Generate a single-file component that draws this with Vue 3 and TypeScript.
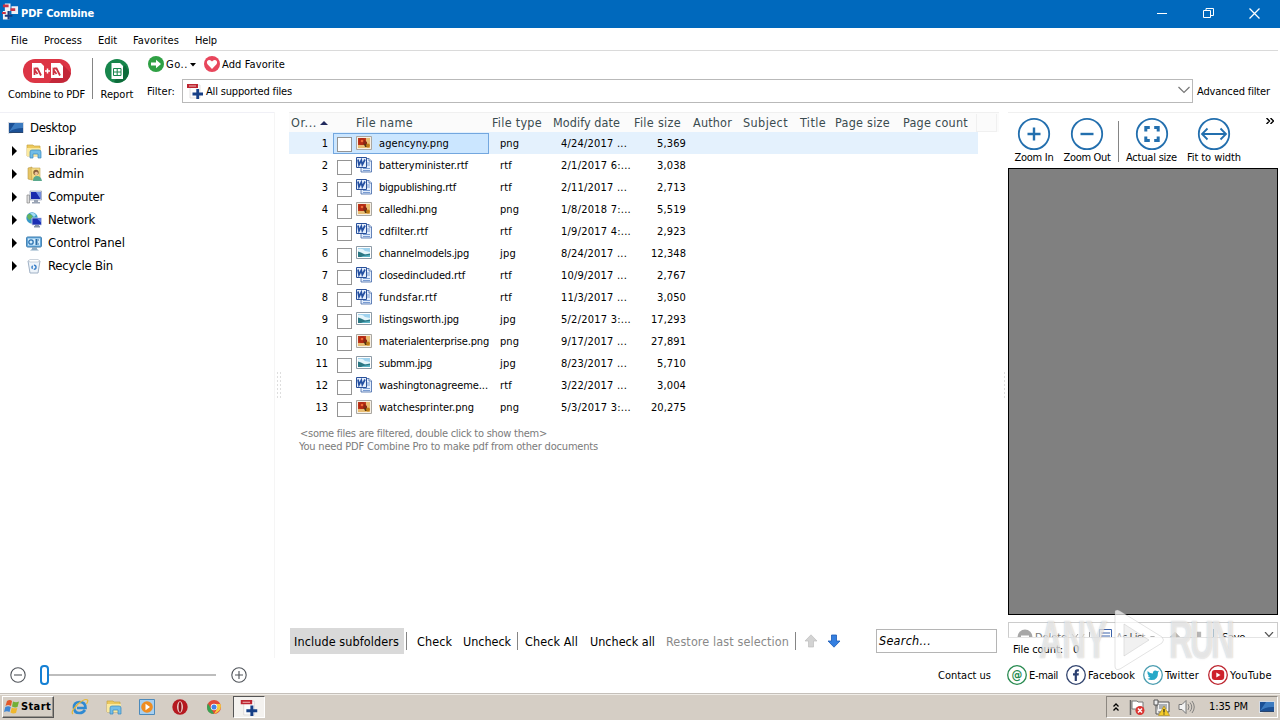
<script setup lang="ts">
import type { Directive } from 'vue'

// Spreads a single-line label over a given width in pixels.
const vFit: Directive<HTMLElement, number> = {
  mounted(el, { value }) {
    el.style.letterSpacing = '0'
    const range = document.createRange()
    range.selectNodeContents(el)
    const natural = range.getBoundingClientRect().width
    const count = (el.textContent ?? '').trim().length
    el.style.letterSpacing = `${(value - natural) / count}px`
    el.style.width = `${value}px`
  },
}

const menu: [string, number][] = [['File', 17], ['Process', 38], ['Edit', 19], ['Favorites', 46], ['Help', 22]]

const tree = [
  { icon: 'libraries', label: 'Libraries', w: 50 },
  { icon: 'user', label: 'admin', w: 36 },
  { icon: 'computer', label: 'Computer', w: 56 },
  { icon: 'network', label: 'Network', w: 47 },
  { icon: 'control', label: 'Control Panel', w: 77 },
  { icon: 'recycle', label: 'Recycle Bin', w: 65 },
]

const columns = [
  { label: 'Or...', w: 26, col: 65 },
  { label: 'File name', w: 57, col: 136 },
  { label: 'File type', w: 50, col: 61 },
  { label: 'Modify date', w: 67, col: 81 },
  { label: 'File size', w: 47, col: 59 },
  { label: 'Author', w: 39, col: 50 },
  { label: 'Subject', w: 45, col: 57 },
  { label: 'Title', w: 26, col: 35 },
  { label: 'Page size', w: 55, col: 68 },
  { label: 'Page count', w: 65, col: 73 },
]

const typeWidth: Record<string, number> = { png: 19, rtf: 12, jpg: 16 }

const files = [
  { name: 'agencyny.png', w: 70, type: 'png', date: '4/24/2017 ...', dw: 66, size: '5,369' },
  { name: 'batteryminister.rtf', w: 89, type: 'rtf', date: '2/1/2017 6:...', dw: 70, size: '3,038' },
  { name: 'bigpublishing.rtf', w: 77, type: 'rtf', date: '2/11/2017 ...', dw: 66, size: '2,713' },
  { name: 'calledhi.png', w: 58, type: 'png', date: '1/8/2018 7:...', dw: 70, size: '5,519' },
  { name: 'cdfilter.rtf', w: 49, type: 'rtf', date: '1/9/2017 4:...', dw: 70, size: '2,923' },
  { name: 'channelmodels.jpg', w: 90, type: 'jpg', date: '8/24/2017 ...', dw: 66, size: '12,348' },
  { name: 'closedincluded.rtf', w: 86, type: 'rtf', date: '10/9/2017 ...', dw: 66, size: '2,767' },
  { name: 'fundsfar.rtf', w: 58, type: 'rtf', date: '11/3/2017 ...', dw: 66, size: '3,050' },
  { name: 'listingsworth.jpg', w: 80, type: 'jpg', date: '5/2/2017 3:...', dw: 70, size: '17,293' },
  { name: 'materialenterprise.png', w: 110, type: 'png', date: '9/17/2017 ...', dw: 66, size: '27,891' },
  { name: 'submm.jpg', w: 53, type: 'jpg', date: '8/23/2017 ...', dw: 66, size: '5,710' },
  { name: 'washingtonagreeme...', w: 109, type: 'rtf', date: '3/22/2017 ...', dw: 66, size: '3,004' },
  { name: 'watchesprinter.png', w: 95, type: 'png', date: '5/3/2017 3:...', dw: 70, size: '20,275' },
]
</script>

<template>
  <div class="screen">
    <svg class="defs" width="0" height="0">
      <defs>
        <symbol id="pdfplus" viewBox="0 0 16 16">
          <path d="M3 2h10v13H3z" fill="#fbfbfb" stroke="#d2cdcd" stroke-width=".6" />
          <path d="M0 1h11v4H0z" fill="#bd2430" />
          <path d="M2 3h7" stroke="#f0b7b7" />
          <path d="M10.700 6v10M5.500 11h10.500" stroke="#163f86" stroke-width="2.800" />
        </symbol>
        <symbol id="monitor" viewBox="0 0 16 16">
          <path d="M0 2h16v11H0z" fill="#d5dae2" />
          <path d="M1 3h14v9H1z" fill="#1b5095" />
          <path d="M1 12L7 3h8v5C9 8 5 9 1 12z" fill="#3c7bc0" />
          <path d="M0 12l5 2H0z" fill="#dfe7ef" />
          <path d="M1 12h14v1H1z" fill="#28456e" />
        </symbol>
        <symbol id="libraries" viewBox="0 0 16 16">
          <path d="M1 2h6l1 1h6v10H1z" fill="#edc95c" stroke="#c5a443" stroke-width=".7" />
          <path d="M1 5h14l-1 8H1z" fill="#fbe99d" />
          <path d="M4 15V9q0-2 2-2h7q2 0 2 2v6h-3v-4H7v4z" fill="#73bde7" stroke="#3787bd" stroke-width=".7" />
        </symbol>
        <symbol id="user" viewBox="0 0 16 16">
          <path d="M2 2l4-1v13l-4-1z" fill="#e7c565" stroke="#b99a48" stroke-width=".6" />
          <path d="M5 2h9v12H6z" fill="#f5dc85" stroke="#c5a651" stroke-width=".6" />
          <circle cx="10" cy="6.500" r="2.700" fill="#8a603b" />
          <circle cx="10.300" cy="7.500" r="1.700" fill="#ecc19b" />
          <path d="M7 15q0-5 4-5t5 5z" fill="#59a98e" />
        </symbol>
        <symbol id="computer" viewBox="0 0 16 16">
          <path d="M1 6h2.500v8H1z" fill="#dedede" stroke="#888" stroke-width=".7" />
          <path d="M4 2h11.500v9H4z" fill="#dbe1ef" stroke="#828da9" stroke-width=".6" />
          <path d="M5 3h9.500v7H5z" fill="#1829ad" />
          <path d="M10 3h4.500v7z" fill="#6f91e6" />
          <path d="M8 11h4v2h2v1.500H6V13h2z" fill="#9aa4b5" />
        </symbol>
        <symbol id="network" viewBox="0 0 16 16">
          <circle cx="6" cy="6" r="5.700" fill="#3798c8" />
          <path d="M2 2q3 0 5 2l-2 3-2 1-2-3zM7 7l3 1-2 3z" fill="#66b45d" />
          <path d="M4 1q4-1 6 2L8 5z" fill="#a4dcf3" />
          <path d="M6 6h9.500v7H6z" fill="#1b2fb4" stroke="#c9d2e4" stroke-width=".8" />
          <path d="M11 6.500h4v4z" fill="#607ee5" />
          <path d="M9 13h4v1h1v1.500H8V14h1z" fill="#8390a6" />
        </symbol>
        <symbol id="control" viewBox="0 0 16 16">
          <rect x=".6" y="2" width="14.800" height="10" rx="1" fill="#69ade0" stroke="#3d7cae" />
          <path d="M2 3.500h12v7H2z" fill="#d5edfc" />
          <circle cx="5" cy="7" r="2.200" fill="none" stroke="#2c73b2" stroke-width="1.300" />
          <path d="M9 5h4M9 7h3M9 9h4M10.500 4v6" stroke="#2d6fa8" />
          <path d="M6 12h5v2l2 1.500H4L6 14z" fill="#8cabc3" />
        </symbol>
        <symbol id="recycle" viewBox="0 0 16 16">
          <path d="M2 3h12l-2 12H4z" fill="#eef4fa" stroke="#a0b1c5" />
          <path d="M2 3l2-1.500h8L14 3l-2 1H4z" fill="#fff" stroke="#b4c0cd" stroke-width=".7" />
          <circle cx="8" cy="9.300" r="2" fill="none" stroke="#3f83ca" stroke-width="1.500" stroke-dasharray="3 1.200" />
        </symbol>
        <symbol id="png" viewBox="0 0 16 16">
          <path d="M.5 1.500h15v13H.5z" fill="#f7f0e6" stroke="#a9a7a1" />
          <path d="M2 3h12v10H2z" fill="#e8bd72" />
          <path d="M2 3h8v7H2z" fill="#c0391b" />
          <circle cx="6" cy="6.500" r="3.500" fill="#b22a14" />
          <circle cx="6" cy="6" r="1.300" fill="#ef6a35" />
          <path d="M8 5l3 2v5L7 9z" fill="#8a2813" />
          <path d="M8 9h3v3H9z" fill="#573514" />
          <circle cx="12" cy="10.500" r="1.900" fill="#bd7a15" />
        </symbol>
        <symbol id="jpg" viewBox="0 0 16 16">
          <path d="M.5 1.500h15v12H.5z" fill="#fff" stroke="#8d9aa5" />
          <path d="M2 3h12v9H2z" fill="#9fd2ee" />
          <path d="M2 4q5-1 7 2l5 1v2H2z" fill="#e5f5fb" />
          <path d="M2 6.500l3 1 4 2 5-1V12H2z" fill="#2b7783" />
          <path d="M7 11l7-1v2H5z" fill="#5bb3c5" />
        </symbol>
        <symbol id="rtf" viewBox="0 0 16 16">
          <path d="M5 1.500h8l2.500 2.500v11H5z" fill="#e3edfc" stroke="#3f65a6" stroke-width=".8" />
          <path d="M13 1.500V4h2.500" fill="#fff" stroke="#3f65a6" stroke-width=".8" />
          <path d="M11 6h3M11 8h3M7 11.500h7M7 13.500h7" stroke="#789bd1" />
          <path d="M.5.500h10v10H.5z" fill="#e6effc" stroke="#29509a" />
          <path d="M2 2.500l1 5.300 2.300-4.500 1 4.500L9 2.500" fill="none" stroke="#2450a2" stroke-width="1.700" />
        </symbol>
        <symbol id="arrow" viewBox="0 0 14 14">
          <path d="M7 .8L13 7h-3.500v6h-5V7H1z" />
        </symbol>
      </defs>
    </svg>

    <header class="titlebar">
      <svg class="appicon" width="17" height="18" viewBox="0 0 18 18">
        <path d="M3 0h6v8H3zM10 3h7v8h-7zM1 8h7v9H1z" fill="#eef0f5" />
        <path d="M1 1h6v3H1zM9 5h5v3H9zM0 9h4v2H0z" fill="#c93345" />
        <path d="M7 8v9M3 13h8" stroke="#173b7d" stroke-width="2.300" />
      </svg>
      <b v-fit="73">PDF Combine</b>
      <svg class="winbtns" width="104" height="12" viewBox="0 0 104 12" fill="none" stroke="#fff">
        <path d="M0 6.500h10M46.500 3.500h7v7h-7zM49 3.500v-2h7.500v7H54" />
        <path d="M92.500 1.500l10 10M102.500 1.500l-10 10" stroke-width="1.300" />
      </svg>
    </header>

    <nav class="menu">
      <span v-for="[m, w] in menu" :key="m" v-fit="w">{{ m }}</span>
    </nav>

    <section class="ribbon">
      <div class="big combine">
        <svg width="48" height="24" viewBox="0 0 48 24">
          <rect width="48" height="24" rx="12" fill="#dc3545" />
          <path d="M26 24L40 6l8 8q-1 10-12 10z" fill="#c32739" />
          <path d="M9 4h9l3 3v12H9zM28 4h9l3 3v12H28z" fill="#fff" />
          <path d="M11.500 9.500h3l3.500 7M11.500 16V11l3 4M30.500 9.500h3l3.500 7M30.500 16V11l3 4" fill="none" stroke="#cd3140" stroke-width="1.800" />
          <path d="M22 12h5M24.500 9.500v5" stroke="#fff" stroke-width="1.500" />
        </svg>
        <span v-fit="77">Combine to PDF</span>
      </div>
      <i class="sep" />
      <div class="big report">
        <svg width="24" height="24" viewBox="0 0 24 24">
          <circle cx="12" cy="12" r="12" fill="#18864c" />
          <path d="M9 23l11-17 4 7q-1 10-12 11z" fill="#0d6b3a" />
          <path d="M6.500 4h8.500l3 3v13H6.500z" fill="#fff" />
          <path d="M8.500 9.500h7.500v7H8.500zM8.500 13h7.500M12.200 9.500v7" fill="none" stroke="#18864c" />
        </svg>
        <span v-fit="33">Report</span>
      </div>
      <div class="side">
        <div class="gorow">
          <svg width="16" height="16" viewBox="0 0 16 16">
            <circle cx="8" cy="8" r="8" fill="#2fa044" />
            <path d="M3 6.500h5V3.800L13 8l-5 4.200V9.500H3z" fill="#fff" />
          </svg>
          <span v-fit="22" class="go">Go..</span>
          <svg class="caret" width="6" height="4" viewBox="0 0 6 4"><path d="M0 0h6L3 3.500z" /></svg>
          <svg class="heart" width="16" height="16" viewBox="0 0 16 16">
            <circle cx="8" cy="8" r="8" fill="#e8465c" />
            <path d="M8 13L3.500 8.200Q2 5.500 4.200 4.200 6.500 3.200 8 5.600 9.500 3.200 11.800 4.200 14 5.500 12.500 8.200z" fill="#fff" />
          </svg>
          <span v-fit="63" class="fav">Add Favorite</span>
        </div>
        <div class="filterrow">
          <span v-fit="28" class="flabel">Filter:</span>
          <div class="combo">
            <svg width="16" height="16"><use href="#pdfplus" /></svg>
            <span v-fit="86">All supported files</span>
            <svg class="chev" width="12" height="8" viewBox="0 0 12 8"><path d="M.5 1l5.500 5.500L11.500 1" fill="none" stroke="#777" stroke-width="1.200" /></svg>
          </div>
          <span v-fit="73">Advanced filter</span>
        </div>
      </div>
    </section>

    <main class="body">
      <aside class="tree">
        <div class="node root">
          <svg width="16" height="16"><use href="#monitor" /></svg>
          <span v-fit="46">Desktop</span>
        </div>
        <div v-for="n in tree" :key="n.label" class="node">
          <svg class="tri" width="5" height="10" viewBox="0 0 5 10"><path d="M0 0l5 5-5 5z" /></svg>
          <svg width="16" height="16"><use :href="'#' + n.icon" /></svg>
          <span v-fit="n.w">{{ n.label }}</span>
        </div>
      </aside>
      <div class="grip"><i /></div>

      <section class="list">
        <div class="thead">
          <div v-for="(c, i) in columns" :key="c.label" class="th" :style="{ width: c.col + 'px' }">
            <span v-fit="c.w">{{ c.label }}</span>
            <svg v-if="i === 0" width="8" height="4" viewBox="0 0 8 4"><path d="M0 4l4-4 4 4z" fill="#222b5e" /></svg>
          </div>
          <i class="thend" />
        </div>
        <div v-for="(f, i) in files" :key="f.name" class="row" :class="{ selected: i === 0 }">
          <span class="num">{{ i + 1 }}</span>
          <div class="namecell">
            <i class="check" />
            <svg width="16" height="16" :class="f.type"><use :href="'#' + f.type" /></svg>
            <span v-fit="f.w">{{ f.name }}</span>
          </div>
          <div class="type"><span v-fit="typeWidth[f.type]">{{ f.type }}</span></div>
          <div class="date"><span v-fit="f.dw">{{ f.date }}</span></div>
          <div class="size"><span v-fit="f.size.length === 5 ? 29 : 35">{{ f.size }}</span></div>
        </div>
        <div class="note">
          <span v-fit="247">&lt;some files are filtered, double click to show them&gt;</span>
          <span v-fit="299" class="second">You need PDF Combine Pro to make pdf from other documents</span>
        </div>
        <div class="actions">
          <div class="pressed"><span v-fit="105">Include subfolders</span></div>
          <i class="bar b1" />
          <span v-fit="35">Check</span>
          <span v-fit="48" class="a2">Uncheck</span>
          <i class="bar b2" />
          <span v-fit="53">Check All</span>
          <span v-fit="65" class="a4">Uncheck all</span>
          <span v-fit="123" class="restore">Restore last selection</span>
          <i class="bar b3" />
          <svg width="14" height="14" fill="#d3d3d3" stroke="#bfbfbf" stroke-width=".7"><use href="#arrow" /></svg>
          <svg class="down" width="14" height="14" fill="#347fe0" stroke="#1c5bb5" stroke-width=".8"><use href="#arrow" /></svg>
          <div class="search"><em v-fit="52">Search...</em></div>
        </div>
      </section>
      <div class="grip right"><i /></div>

      <section class="preview">
        <div class="ptools">
          <div class="pt zin">
            <svg width="34" height="34" viewBox="0 0 34 34" class="ring"><circle cx="17" cy="17" r="15.200" /><path d="M10.500 17h13M17 10.500v13" stroke-width="2.400" /></svg>
            <span v-fit="39">Zoom In</span>
          </div>
          <div class="pt zout">
            <svg width="34" height="34" viewBox="0 0 34 34" class="ring"><circle cx="17" cy="17" r="15.200" /><path d="M10.500 17h13" stroke-width="2.400" /></svg>
            <span v-fit="47">Zoom Out</span>
          </div>
          <i class="psep" />
          <div class="pt act">
            <svg width="34" height="34" viewBox="0 0 34 34" class="ring"><circle cx="17" cy="17" r="15.200" /><path d="M10.800 14.500v-4h4M19.200 10.500h4v4M23.200 19.500v4h-4M14.800 23.500h-4v-4" stroke-width="3" /></svg>
            <span v-fit="51">Actual size</span>
          </div>
          <div class="pt fitw">
            <svg width="34" height="34" viewBox="0 0 34 34" class="ring"><circle cx="17" cy="17" r="15.200" /><path d="M5 17h24M10.500 11.500L5 17l5.500 5.500M23.500 11.500L29 17l-5.500 5.500" /></svg>
            <span v-fit="54">Fit to width</span>
          </div>
          <svg class="more" width="8" height="6" viewBox="0 0 8 6"><path d="M.5 0l3 3-3 3M4.500 0l3 3-3 3" fill="none" stroke="#000" stroke-width="1.400" /></svg>
        </div>
        <div class="canvas" />
        <div class="ptoolbar">
          <svg class="del" width="16" height="16" viewBox="0 0 16 16"><circle cx="8" cy="8" r="7.500" fill="#a7a7a7" /><path d="M4 8h8" stroke="#fff" stroke-width="3" /></svg>
          <span v-fit="32" class="dis">Delete</span>
          <svg class="dx" width="20" height="12" viewBox="0 0 20 12"><path d="M1 2l6 8M7 2l-6 8M13 2l-3 6M18.500 0v12" fill="none" stroke="#999" /></svg>
          <svg class="aslist" width="13" height="14" viewBox="0 0 13 14"><path d="M.5.500h12v13H.5z" fill="#fff" stroke="#3b62aa" /><path d="M2 4h9M2 7h9M2 10h9" stroke="#3b62aa" /></svg>
          <span v-fit="29">As List</span>
          <svg class="lc" width="5" height="3" viewBox="0 0 5 3"><path d="M0 0h5L2.500 3z" /></svg>
          <svg class="pa" width="12" height="12" fill="#b5b5b5"><use href="#arrow" /></svg>
          <svg class="pa flip" width="12" height="12" fill="#b5b5b5"><use href="#arrow" /></svg>
          <i class="tsep" />
          <span v-fit="23" class="save">Save</span>
          <svg class="chev2" width="10" height="6" viewBox="0 0 10 6"><path d="M1 0l4 4.500L9 0" fill="none" stroke="#555" stroke-width="1.200" /></svg>
        </div>
        <div class="count"><span v-fit="50">File count:</span><span>0</span></div>
      </section>
    </main>

    <footer class="foot">
      <svg class="zoomer" width="16" height="16" viewBox="0 0 16 16"><circle cx="8" cy="8" r="7.200" /><path d="M4 8h8" /></svg>
      <div class="track"><i /></div>
      <svg class="zoomer" width="16" height="16" viewBox="0 0 16 16"><circle cx="8" cy="8" r="7.200" /><path d="M4 8h8M8 4v8" /></svg>
      <div class="links">
        <span v-fit="53" class="contact">Contact us</span>
        <svg width="20" height="20" viewBox="0 0 20 20"><circle cx="10" cy="10" r="9.300" fill="#fff" stroke="#288a50" stroke-width="1.300" /><text x="10" y="14" text-anchor="middle" font-size="12" font-weight="bold" fill="#288a50">@</text></svg>
        <span v-fit="29" class="mail">E-mail</span>
        <svg width="20" height="20" viewBox="0 0 20 20"><circle cx="10" cy="10" r="9.300" fill="#fff" stroke="#33456f" stroke-width="1.300" /><path d="M8.700 16v-5.500H7V8.300h1.700V7q0-2.700 2.600-2.700h1.600v2.200h-1q-1 0-1 1v.8h2l-.3 2.200h-1.700V16z" fill="#2b3f70" /></svg>
        <span v-fit="47" class="fb">Facebook</span>
        <svg width="20" height="20" viewBox="0 0 20 20"><circle cx="10" cy="10" r="9.300" fill="#fff" stroke="#4b9db0" stroke-width="1.300" /><path d="M4.500 6q2.500 2.600 5.300 2.600Q10 5.500 12.200 5.500q1.300 0 2 .8l1.800-.6-1 1.700q.2 7.600-6.500 7.600Q6 15 4.300 13.700q2 0 3-1-2-.5-2.400-2h1Q4 9.500 4.500 6z" fill="#28a8c8" /></svg>
        <span v-fit="34" class="tw">Twitter</span>
        <svg width="20" height="20" viewBox="0 0 20 20"><circle cx="10" cy="10" r="9.300" fill="#fff" stroke="#bd2630" stroke-width="1.300" /><rect x="3.800" y="5" width="12.400" height="10" rx="3" fill="#ce222c" /><path d="M8.300 7.500v5l4.200-2.500z" fill="#fff" /></svg>
        <span v-fit="42" class="yt">YouTube</span>
      </div>
    </footer>

    <div class="taskbar">
      <div class="start">
        <svg width="16" height="16" viewBox="0 0 16 16">
          <path d="M3 2q3-2 5 0L7 7Q4 5 1.500 7z" fill="#e2582a" />
          <path d="M9 2.500q3 1.500 6 0L13.500 8Q11 9 8 7.500z" fill="#72af36" />
          <path d="M1.300 8q3-1.500 5.500 0l-1.300 5Q3 11.500 0 13z" fill="#3f86d4" />
          <path d="M7.800 8.500q3 1.500 5.500.4L12 14q-3 1.200-5.500-.5z" fill="#efb72e" />
        </svg>
        <b v-fit="30">Start</b>
      </div>
      <div class="quick">
        <svg width="18" height="18" viewBox="0 0 18 18"><path d="M14 12q-2 3-5.500 3Q3 15 3 9.500T8.500 4q6 0 6 6H6" fill="none" stroke="#2f8ad2" stroke-width="2.700" /><path d="M2 16Q-1 14 7 6q7-6 9.500-4 1 1-1 4" fill="none" stroke="#e5b837" stroke-width="1.200" /></svg>
        <svg width="16" height="16"><use href="#libraries" /></svg>
        <svg width="16" height="16" viewBox="0 0 16 16"><path d="M.5.500h15v15H.5z" fill="#a7cff0" stroke="#4c8abb" /><circle cx="8" cy="8" r="5.800" fill="#ef8d22" /><path d="M6.500 4.800v6.400L11 8z" fill="#fff" /></svg>
        <svg width="16" height="16" viewBox="0 0 16 16"><circle cx="8" cy="8" r="7.700" fill="#b51920" /><ellipse cx="8" cy="8" rx="2.900" ry="5.700" fill="#f1ded9" /><ellipse cx="8" cy="8" rx="1.500" ry="5" fill="#961018" /></svg>
        <svg class="chrome" width="14" height="14" viewBox="0 0 16 16"><circle cx="8" cy="8" r="8" fill="#e24a38" /><path d="M1 4l5 8 2 4Q0 16 0 8q0-2 1-4z" fill="#38a252" /><path d="M8 4.500h7.300Q18 12 8 16l4-7z" fill="#f5cd3e" /><circle cx="8" cy="8" r="3.700" fill="#fff" /><circle cx="8" cy="8" r="2.900" fill="#4284e8" /></svg>
      </div>
      <div class="active"><svg width="18" height="17" viewBox="0 0 16 16"><use href="#pdfplus" /></svg></div>
      <div class="tray">
        <svg class="up" width="6" height="8" viewBox="0 0 6 8"><path d="M.5 3.500L3 1l2.500 2.500M.5 7.500L3 5l2.500 2.500" fill="none" stroke="#000" stroke-width="1.300" /></svg>
        <svg class="flag" width="16" height="16" viewBox="0 0 16 16"><path d="M1.500 1v15" stroke="#666" stroke-width="1.500" /><path d="M3 2h5l1 1h5v7H3z" fill="#fff" stroke="#777" /><circle cx="11" cy="11.500" r="4.500" fill="#da3431" /><path d="M9 9.500l4 4M13 9.500l-4 4" stroke="#fff" stroke-width="1.500" /></svg>
        <svg class="net" width="17" height="17" viewBox="0 0 17 17"><path d="M4 3h12v10H4z" fill="#f3f3f3" stroke="#555" /><path d="M6 5h8v5H6z" fill="#abb0b5" /><path d="M1 1h4v5H1zM3 6v9h3" fill="#eee" stroke="#555" /><path d="M11 7l5.500 9.500h-11z" fill="#f4cb29" stroke="#a8861c" stroke-width=".6" /><path d="M11 10v3.500M11 14.500v1" stroke="#222" stroke-width="1.200" /></svg>
        <svg class="vol" width="17" height="14" viewBox="0 0 17 14"><path d="M1 4.500h3l4-4v13l-4-4H1z" fill="#f3f3f3" stroke="#777" /><path d="M10 4q2 3 0 6M12 2.500q3.500 4.500 0 9M14 1q4.500 6 0 12" fill="none" stroke="#777" stroke-width=".9" /></svg>
        <span v-fit="39">1:35 PM</span>
        <svg class="mon" width="16" height="16"><use href="#monitor" /></svg>
      </div>
    </div>

    <div class="watermark">
      <span v-fit="68" class="wm">ANY</span>
      <svg width="56" height="62" viewBox="0 0 56 62">
        <path fill-rule="evenodd" d="M6 2q2-2 5 0l42 26q3 3 0 6L11 60q-5 2-5-3zM15 15v32l25-16z" fill="#fff" fill-opacity=".7" stroke="#9a9a9a" stroke-opacity=".35" stroke-width=".8" />
        <path d="M15 15v32l25-16z" fill="#d6d6d6" fill-opacity=".35" />
      </svg>
      <span v-fit="63" class="wm">RUN</span>
    </div>
  </div>
</template>

<style>
html, body { margin: 0; overflow: hidden; }
</style>

<style scoped>
.screen {
  position: relative; width: 1280px; height: 720px; overflow: hidden;
  display: flex; flex-direction: column; background: #fff; color: #000;
  font: 11px/14px "DejaVu Sans Condensed", "DejaVu Sans", sans-serif;
  font-stretch: condensed;
}
.screen * { box-sizing: border-box; }
.defs { position: absolute; }
svg { display: block; flex: none; }
span, b, em { display: block; flex: none; white-space: nowrap; padding-top: 2px; }
i { display: block; flex: none; }

.titlebar { height: 28px; flex: none; background: #0069bd; color: #fff; display: flex; align-items: center; padding: 0 18px 3px 2px; }
.appicon { margin: -2px 2px 0 0; }
.winbtns { margin-left: auto; margin-right: 1px; }
.menu { height: 23px; flex: none; display: flex; align-items: center; gap: 16px; padding: 1px 0 0 11px; border-bottom: 1px solid #dadada; margin-right: 2px; }

.ribbon { height: 61px; flex: none; display: flex; }
.big { display: flex; flex-direction: column; align-items: center; gap: 3px; padding-top: 8px; }
.combine { width: 77px; margin-left: 8px; }
.sep { width: 1px; height: 41px; background: #858585; margin: 7px 7px 0 7px; }
.report { width: 34px; }
.side { flex: 1; padding: 5px 9px 0 13px; }
.gorow { display: flex; align-items: center; height: 16px; padding-left: 1px; }
.go { margin-left: 2px; }
.caret { margin: 1px 8px 0 2px; }
.fav { margin-left: 2px; }
.filterrow { display: flex; align-items: center; margin-top: 7px; }
.flabel { margin-right: 7px; }
.combo { width: 1011px; height: 24px; border: 1px solid #b9b9b9; display: flex; align-items: center; padding: 0 2px 0 4px; gap: 3px; margin-right: 4px; }
.chev { margin-left: auto; margin-top: -2px; }

.body { height: 546px; flex: none; display: flex; }
.tree { width: 274px; border-top: 1px solid #f0f0f6; padding-top: 3px; font-size: 13px; }
.tree span, .thead span { padding-top: 0; }
.node { display: flex; align-items: center; height: 23px; padding-left: 12px; }
.node.root { padding-left: 8px; }
.node span { margin-left: 6px; }
.tri { margin-right: 9px; }
.grip { width: 14px; border-left: 1px solid #f5f5f5; padding: 259px 0 0 1px; }
.grip i { width: 7px; height: 27px; background-image: radial-gradient(circle, #dedede 0.700px, transparent 1px); background-size: 3px 4px; }
.grip.right { width: 9px; border: 0; padding-left: 4px; }
.grip.right i { width: 3px; }

.list { width: 711px; display: flex; flex-direction: column; padding-left: 1px; }
.thead { height: 20px; display: flex; align-items: center; padding-left: 2px; background: #fbfbfb; color: #3a4b50; font-size: 12.500px; border-top: 1px solid #f0f0f0; }
.th { display: flex; align-items: center; gap: 3px; flex: none; }
.thend { width: 21px; height: 18px; border: 1px solid #f0f0f0; border-top: 0; }
.row { height: 22px; width: 689px; display: flex; align-items: center; flex: none; }
.row.selected { background: #e4f1fd; }
.num { width: 40px; text-align: right; padding-right: 1px; margin-right: 4px; }
.namecell { width: 156px; height: 21px; display: flex; align-items: center; padding-left: 3px; border: 1px solid transparent; margin-right: 11px; }
.selected .namecell { background: #cbe6ff; border-color: #73a7df; }
.check { width: 15px; height: 15px; border: 1px solid #949494; background: #fff; margin: 5px 4px 0 0; }
.selected .check { margin-top: 2px; }
.namecell svg { margin-right: 7px; }
.namecell svg.rtf { margin-top: -1px; }
.type { width: 61px; }
.date { width: 85px; }
.size { width: 40px; display: flex; justify-content: flex-end; }
.note { color: #7b7b7b; padding: 9px 0 0 11px; line-height: 13px; }
.note span { padding-top: 0; }
.second { margin-left: -1px; }
.actions { margin-top: auto; margin-bottom: 4px; height: 26px; display: flex; align-items: center; font-size: 12.500px; padding-left: 1px; }
.pressed { height: 26px; width: 114px; background: #d9d9d9; display: flex; align-items: center; padding-left: 4px; }
.bar { width: 1px; height: 18px; background: #858585; }
.b1 { margin: 0 10px 0 2px; }
.a2 { margin-left: 11px; }
.b2 { margin: 0 7px 0 6px; }
.a4 { margin-left: 12px; }
.restore { margin-left: 11px; color: #898989; }
.b3 { margin: 0 8px 0 6px; }
.down { transform: rotate(180deg); margin-left: 9px; }
.search { width: 121px; height: 24px; border: 1px solid #b5b5b5; margin-left: auto; margin-right: 2px; padding: 2px 0 0 2px; }

.preview { width: 272px; display: flex; flex-direction: column; }
.ptools { height: 56px; display: flex; border-top: 1px solid #f0f0f0; padding-top: 4px; }
.pt { display: flex; flex-direction: column; align-items: center; }
.pt span { margin-top: -2px; }
.ring { fill: none; stroke: #236fae; stroke-width: 1.800; }
.zin { width: 40px; margin-left: 6px; }
.zout { width: 48px; margin-left: 9px; }
.psep { width: 1px; height: 41px; background: #858585; margin: 4px 7px 0 7px; }
.act { width: 51px; }
.fitw { width: 54px; margin-left: 10px; }
.more { margin: 1px 0 0 25px; }
.canvas { width: 270px; height: 447px; background: #808080; border: 1px solid #000; }
.ptoolbar { margin-top: 7px; width: 270px; height: 16px; border: 1px solid #ccc; border-bottom-color: #e4e4e4; overflow: hidden; display: flex; align-items: flex-start; padding: 6px 0 0 8px; flex: none; }
.del { margin: 0 2px 0 0; }
.dis { color: #777; }
.dx { margin: 3px 8px 0 4px; }
.aslist { margin: 0 4px 0 0; }
.lc { margin: 7px 14px 0 5px; }
.pa { margin: 2px 12px 0 0; }
.flip { transform: rotate(180deg); margin-right: 8px; }
.tsep { width: 1px; height: 14px; background: #858585; }
.save { margin-left: 8px; }
.chev2 { margin: 3px 0 0 19px; }
.count { display: flex; padding: 3px 0 0 5px; gap: 10px; }

.foot { height: 35px; flex: none; display: flex; align-items: center; padding: 0 8px 1px 10px; }
.zoomer { fill: none; stroke: #50545a; stroke-width: 1.100; }
.track { width: 176px; height: 20px; margin: 0 15px 0 14px; display: flex; align-items: center; background: linear-gradient(#bdbdbd, #bdbdbd) 0 9px / 100% 2px no-repeat; }
.track i { width: 9px; height: 20px; border: 2px solid #1580d4; border-radius: 4px; background: #fff; }
.links { margin-left: auto; display: flex; align-items: center; }
.contact { margin-right: 16px; }
.mail { margin: 0 8px 0 2px; }
.fb { margin: 0 8px 0 2px; }
.tw { margin: 0 9px 0 2px; }
.yt { margin-left: 2px; }
.links text { font-family: "DejaVu Sans", sans-serif; }

.taskbar { height: 27px; flex: none; background: #d5cec5; border-top: 1px solid #c5c0ba; box-shadow: inset 0 1px #f0ede8; display: flex; align-items: center; padding: 0 2px; }
.start { width: 52px; height: 22px; border: 1px solid; border-color: #fff #555 #555 #fff; box-shadow: inset -1px -1px #99948d; display: flex; align-items: center; padding-left: 1px; gap: 1px; }
.start b { padding-top: 0; }
.quick { display: flex; align-items: center; gap: 17px; margin-left: 17px; }
.chrome { margin-left: 2px; }
.active { width: 32px; height: 22px; background: #f4f2ef; border: 1px solid; border-color: #555 #fff #fff #555; display: flex; align-items: center; justify-content: center; margin-left: 12px; }
.tray { margin-left: auto; width: 172px; height: 22px; border: 1px solid; border-color: #8c8780 #fff #fff #8c8780; display: flex; align-items: center; padding-left: 6px; }
.tray span { padding-top: 0; }
.flag { margin-left: 10px; }
.net { margin-left: 8px; }
.vol { margin: 0 14px 0 8px; }
.mon { margin-left: 11px; }

.watermark { position: absolute; left: 1039px; top: 609px; width: 210px; height: 62px; display: flex; align-items: center; color: rgba(255, 255, 255, .62); font: bold 33px/34px "Liberation Sans", Arial, sans-serif; text-shadow: 0 0 1px rgba(130, 130, 130, .5); pointer-events: none; }
.wm { transform: scaleY(1.6); padding-top: 0; }
.watermark svg { margin: 0 4px 0 2px; }
</style>
